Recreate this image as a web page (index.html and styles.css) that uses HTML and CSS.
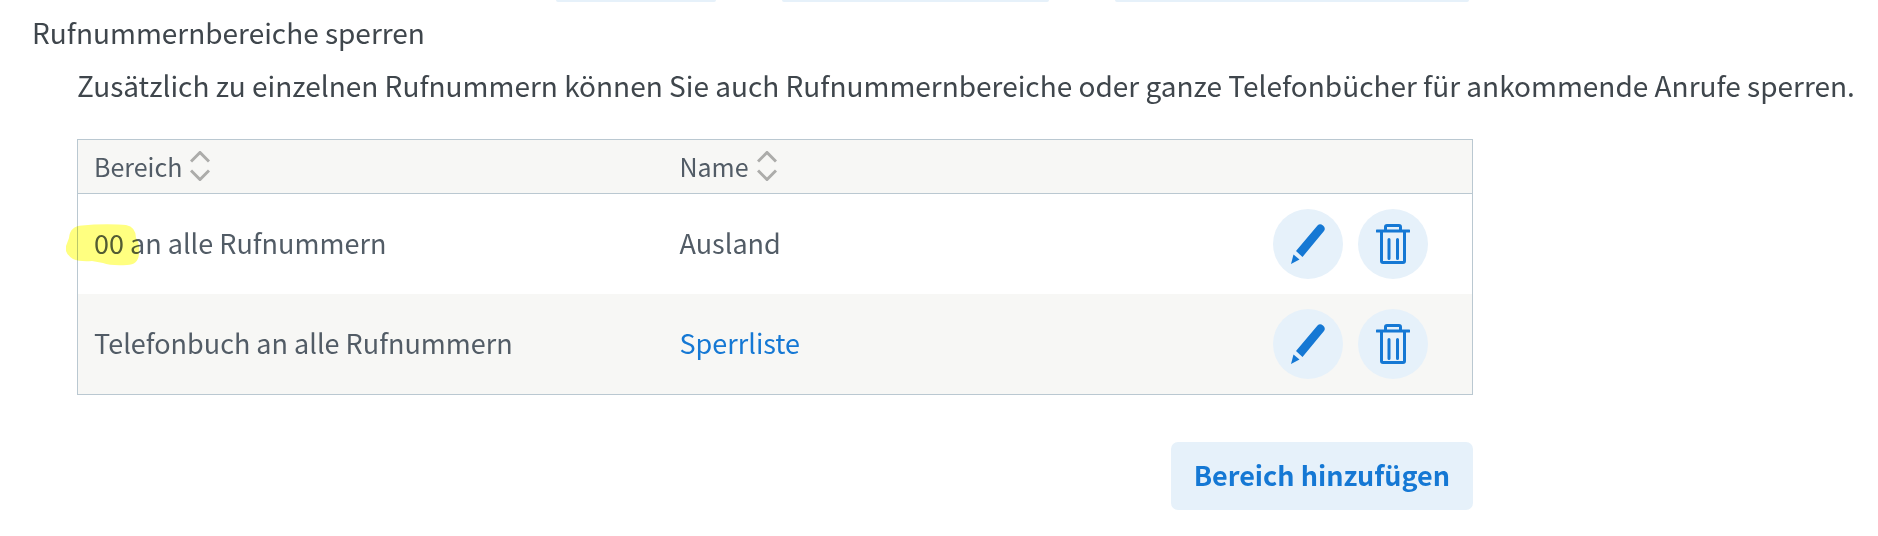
FILE: index.html
```html
<!DOCTYPE html>
<html lang="de">

<head>
  <meta charset="UTF-8">
  <meta name="viewport" content="width=device-width, initial-scale=1.0">
  <title>Rufnummernbereiche sperren</title>
  <link rel="stylesheet" href="styles.css">
</head>

<body>
  <!-- icons -->
  <svg class="sprite" width="0" height="0" aria-hidden="true">
    <symbol id="sort" viewBox="0 0 20 30">
      <path d="M1 10.500 L10 1.500 L19 10.500 M1 19.500 L10 28.500 L19 19.500" fill="none" stroke="#acacaa" stroke-width="3" />
    </symbol>
    <symbol id="edit" viewBox="0 0 36 40">
      <path d="M27.500 1.500 Q30 -1 33 1.500 Q36 4 34 7 L12.500 33 L6 27 Z M3.500 30.500 L9.500 35.500 L1 40 Z" />
    </symbol>
    <symbol id="trash" viewBox="0 0 34 40">
      <path d="M1 7 H33 M9.500 6 V3 Q9.500 1.500 11 1.500 H23 Q24.500 1.500 24.500 3 V6 M5.500 7 V37 Q5.500 38.500 7 38.500 H27 Q28.500 38.500 28.500 37 V7 M13 15.500 V34.500 M21.500 15.500 V34.500" fill="none" stroke="currentColor" stroke-width="3" stroke-linecap="round" />
    </symbol>
  </svg>

  <div class="top-buttons">
    <button type="button" class="btn-s" aria-label="Bearbeiten"></button>
    <button type="button" class="btn-m" aria-label="Übernehmen"></button>
    <button type="button" class="btn-l" aria-label="Hinzufügen"></button>
  </div>

  <main>
    <h2>Rufnummernbereiche sperren</h2>
    <div class="content">
      <p>Zusätzlich zu einzelnen Rufnummern können Sie auch Rufnummernbereiche oder ganze Telefonbücher für ankommende Anrufe sperren.</p>
      <div class="list">
        <table>
          <thead>
            <tr>
              <th class="bereich"><button type="button" class="sort">Bereich<svg><use href="#sort" /></svg></button></th>
              <th class="name"><button type="button" class="sort">Name<svg><use href="#sort" /></svg></button></th>
              <th></th>
            </tr>
          </thead>
          <tbody>
            <tr>
              <td><span class="marked">00<svg class="marker" viewBox="0 0 74 42"><path d="M3 14 Q4 2 16 1.500 L28 0.500 Q50 0 60 1 Q70 3 70 14 Q74 18 73 30 Q72 41 61 41 Q45 42 37 39 L26 37 Q14 38 7 35 Q-2 29 0 22 Z" /></svg></span> an alle Rufnummern</td>
              <td>Ausland</td>
              <td class="edit-cell">
                <div class="actions">
                  <button type="button" aria-label="Bearbeiten"><svg class="edit"><use href="#edit" /></svg></button>
                  <button type="button" aria-label="Löschen"><svg class="trash"><use href="#trash" /></svg></button>
                </div>
              </td>
            </tr>
            <tr>
              <td>Telefonbuch an alle Rufnummern</td>
              <td><a href="#">Sperrliste</a></td>
              <td class="edit-cell">
                <div class="actions">
                  <button type="button" aria-label="Bearbeiten"><svg class="edit"><use href="#edit" /></svg></button>
                  <button type="button" aria-label="Löschen"><svg class="trash"><use href="#trash" /></svg></button>
                </div>
              </td>
            </tr>
          </tbody>
        </table>
        <button type="button" class="add">Bereich hinzufügen</button>
      </div>
    </div>
  </main>
</body>

</html>
```
FILE: styles.css
```css
* {
  margin: 0;
  padding: 0;
  box-sizing: border-box;
}

body {
  font-family: "Noto Sans CJK SC", "Noto Sans", sans-serif;
  font-size: 28px;
  line-height: 40px;
  color: #3f464c;
  background-color: #fff;
}

button {
  font-family: inherit;
  color: #1578d4;
  background-color: #e6f1fa;
  border: none;
  cursor: pointer;
}

.sprite {
  position: absolute;
}

.top-buttons {
  display: flex;
  justify-content: flex-end;
  gap: 66px;
  width: 1469px;
  max-width: 100%;
}

.top-buttons button {
  height: 2px;
  border-radius: 0 0 2px 2px;
}

.btn-s {
  width: 160px;
}

.btn-m {
  width: 267px;
}

.btn-l {
  width: 354px;
}

main {
  padding: 10px 0 24px 32px;
}

h2 {
  font-size: 28px;
  font-weight: 400;
}

.content {
  padding: 13px 0 0 45px;
}

.list {
  display: flex;
  flex-direction: column;
  max-width: 1396px;
  margin-top: 34px;
  font-size: 27px;
}

table {
  width: 100%;
  table-layout: fixed;
  border-collapse: separate;
  border-spacing: 0;
  border: 1px solid #bac8d1;
  color: #525c66;
}

th,
td {
  padding: 0 16px 3px;
  text-align: left;
  font-weight: 400;
  vertical-align: middle;
}

th {
  height: 54px;
  padding-bottom: 0;
  background-color: #f7f7f5;
  border-bottom: 1px solid #bac8d1;
}

td {
  height: 100px;
}

.edit-cell {
  padding-bottom: 0;
}

tbody tr:nth-child(even) td {
  background-color: #f7f7f5;
}

.bereich,
.name {
  width: 42%;
}

.sort {
  display: flex;
  align-items: center;
  gap: 8px;
  padding-bottom: 1px;
  font-size: 25px;
  line-height: 40px;
  color: inherit;
  background: none;
}

.sort svg {
  width: 20px;
  height: 30px;
}

a {
  color: #1578d4;
  text-decoration: none;
}

/* highlighter over the prefix */
.marked {
  position: relative;
}

.marker {
  position: absolute;
  top: 1px;
  left: -28px;
  width: 74px;
  height: 42px;
  fill: #ffff80;
  mix-blend-mode: multiply;
}

.actions {
  display: flex;
  justify-content: flex-end;
  gap: 15px;
  padding-right: 28px;
}

.actions button {
  display: flex;
  align-items: center;
  justify-content: center;
  width: 70px;
  height: 70px;
  border-radius: 50%;
}

.edit {
  width: 36px;
  height: 40px;
  fill: currentColor;
}

.trash {
  width: 34px;
  height: 40px;
}

.add {
  align-self: flex-end;
  margin-top: 47px;
  padding: 13px 23px 15px;
  border-radius: 7px;
  font-size: 27px;
  font-weight: 600;
  line-height: 40px;
}
```
